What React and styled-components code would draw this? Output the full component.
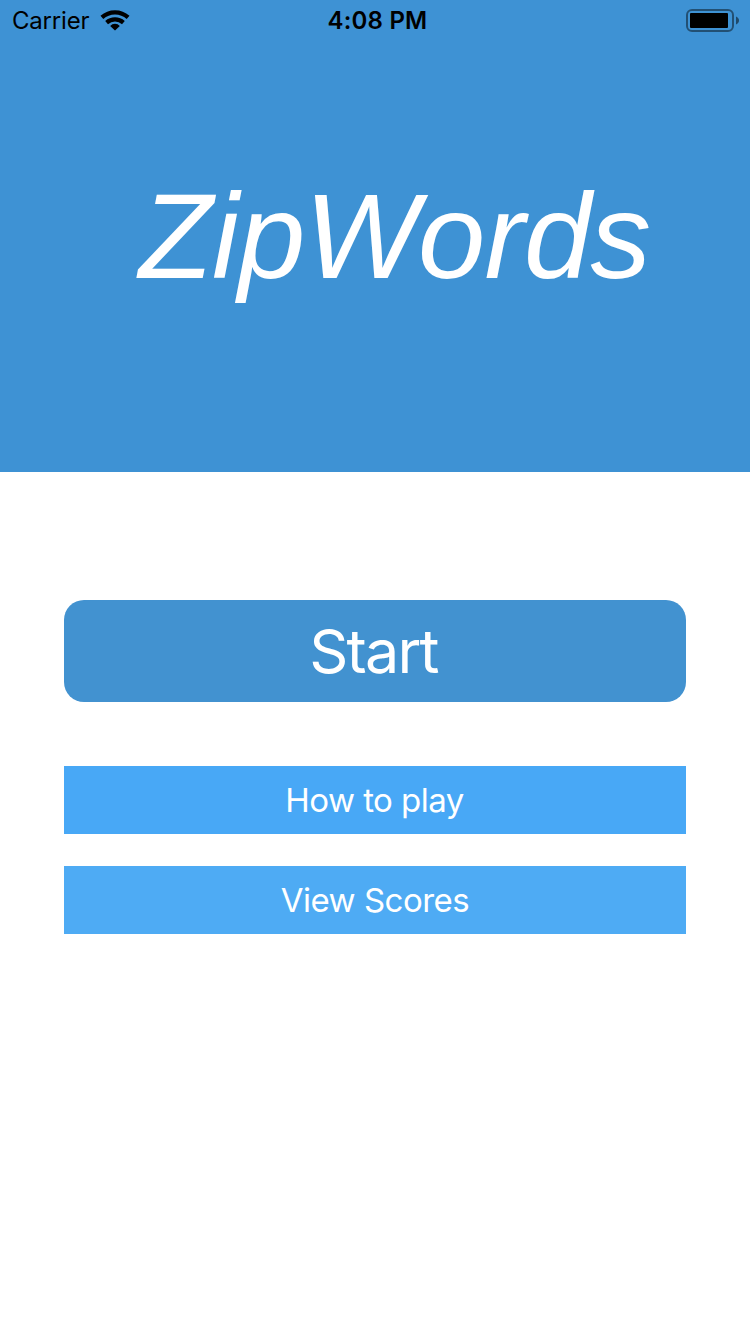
import React from 'react';
import styled, { createGlobalStyle } from 'styled-components';

const GlobalStyle = createGlobalStyle`
  * { box-sizing: border-box; }
  body { margin: 0; background: #fff; }
`;
const Screen = styled.main`
  width: 750px;
  height: 1334px;
  display: flex;
  flex-direction: column;
  overflow: hidden;
  background: #fff;
  font-family: Inter, "Liberation Sans", sans-serif;
`;
const Hero = styled.header`
  height: 472px;
  background: #3e92d4;
`;
const StatusBar = styled.div`
  height: 42px;
  display: grid;
  grid-template-columns: 1fr auto 1fr;
  align-items: center;
  padding: 0 10px 0 12px;
  color: #000;
`;
const Network = styled.div`
  display: flex;
  align-items: center;
  gap: 11px;
`;
const Label = styled.span`
  font-size: ${(p) => p.$size}px;
  font-weight: ${(p) => p.$weight || 400};
  letter-spacing: ${(p) => p.$spacing || 0}px;
  margin-right: ${(p) => p.$trim || 0}px;
  white-space: nowrap;
  line-height: 1.2;
`;
const Battery = styled.svg`
  justify-self: end;
`;
const Title = styled.h1`
  margin: 0;
  padding: 122px 0 0 39px;
  text-align: center;
  font: italic 400 121px/144px "Liberation Sans", sans-serif;
  letter-spacing: -0.8px;
  color: #fff;
`;
const Menu = styled.nav`
  display: flex;
  flex-direction: column;
  padding: 128px 64px 0;
`;
const StartButton = styled.button`
  height: 102px;
  margin-bottom: 64px;
  padding: 1px 0 0;
  border: 0;
  border-radius: 20px;
  background: #4292d0;
  color: #fff;
  font-family: inherit;
`;
const LinkButton = styled.button`
  height: 68px;
  margin-bottom: 32px;
  padding: 2px 0 0;
  border: 0;
  background: ${(p) => p.$color};
  color: #fff;
  font-family: inherit;
`;

export default function App() {
  return (
    <Screen>
      <GlobalStyle />
      <Hero>
        <StatusBar>
          <Network>
            <Label $size={24} $spacing={-0.2}>Carrier</Label>
            <svg width="30" height="22" viewBox="0 0 30 22" fill="none" stroke="#000" strokeWidth="4.2">
              <path d="M1.900 7.400a19.500 19.500 0 0 1 26.200 0" />
              <path d="M6.600 12.600a12.600 12.600 0 0 1 16.800 0" />
              <path d="M15 20.500l-4.800-4.600a6.600 6.600 0 0 1 9.600 0z" fill="#000" stroke="none" />
            </svg>
          </Network>
          <Label $size={24} $weight={600} $spacing={0.2} $trim={-3}>4:08 PM</Label>
          <Battery width="54" height="24" viewBox="0 0 54 24">
            <rect x="1" y="1" width="46" height="21" rx="5" fill="none" stroke="#000" strokeOpacity=".45" strokeWidth="2" />
            <rect x="4" y="4" width="38" height="15" rx="1" />
            <path d="M50 7.500c4 1.500 4 6.500 0 8z" fillOpacity=".5" />
          </Battery>
        </StatusBar>
        <Title>ZipWords</Title>
      </Hero>
      <Menu>
        <StartButton><Label $size={61} $spacing={-1.8} $trim={3}>Start</Label></StartButton>
        <LinkButton $color="#48a8f6"><Label $size={33} $spacing={-0.55} $trim={1}>How to play</Label></LinkButton>
        <LinkButton $color="#4eabf4"><Label $size={33} $spacing={-0.5}>View Scores</Label></LinkButton>
      </Menu>
    </Screen>
  );
}
